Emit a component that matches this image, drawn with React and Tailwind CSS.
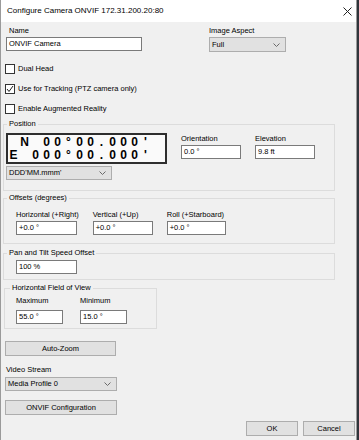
import React from 'react'

const font = { fontFamily: '"Liberation Sans", Arial, sans-serif' }

function Chevron() {
  return (
    <svg width="7" height="4" viewBox="0 0 7 4" className="shrink-0">
      <polyline points="0.5,0.5 3.5,3.5 6.5,0.5" fill="none" stroke="#6a6a6a" strokeWidth="1" />
    </svg>
  )
}

function TextBox({ value, className = '' }) {
  return (
    <div className={`h-[14px] bg-white border border-[#7a7a7a] flex items-center pl-[2px] ${className}`}>
      {value}
    </div>
  )
}

function Combo({ value, className = '' }) {
  return (
    <div className={`h-[14px] bg-[#e1e1e1] border border-[#adadad] flex items-center justify-between pl-[2px] pr-[5px] ${className}`}>
      <span>{value}</span>
      <Chevron />
    </div>
  )
}

function Button({ children, className = '' }) {
  return (
    <div className={`h-[15px] bg-[#e1e1e1] border border-[#adadad] flex items-center justify-center ${className}`}>
      {children}
    </div>
  )
}

function Check({ label, checked }) {
  return (
    <div className="h-[20px] flex items-center gap-[3px] ml-[-1px]">
      <div className="w-[10px] h-[10px] bg-white border border-[#333333] flex items-center justify-center">
        {checked && (
          <svg width="8" height="8" viewBox="0 0 8 8">
            <polyline points="1,4 3,6.5 7,1" fill="none" stroke="#222" strokeWidth="1" />
          </svg>
        )}
      </div>
      <span>{label}</span>
    </div>
  )
}

function Group({ title, className = '', children }) {
  return (
    <fieldset className={`border border-[#dcdcdc] pl-[2px] ${className}`}>
      <legend className="ml-[1px] px-[2px] h-[10px] leading-[10px]">{title}</legend>
      {children}
    </fieldset>
  )
}

function Field({ label, value, width }) {
  return (
    <div className="flex flex-col">
      <div className="h-[10px] leading-[10px]">{label}</div>
      <TextBox value={value} className={`mt-[1px] ${width}`} />
    </div>
  )
}

function LcdRow({ text }) {
  return (
    <div className="flex h-[13px] items-center">
      {text.split('').map((c, i) => (
        <span key={i} className="w-[11px] text-center leading-[12px]">{c}</span>
      ))}
    </div>
  )
}

export default function App() {
  return (
    <div className="w-[359px] h-[440px] bg-[#30353b] flex text-[7.5px] text-black leading-[10px]" style={font}>
      <div className="w-[357px] h-full bg-[#f0f0f0] border-l border-r border-[#9a9a9a] flex flex-col">
        {/* Title bar */}
        <div className="h-[22px] bg-white flex items-center justify-between pl-[6px] pr-[4px]">
          <span className="text-[8px]">Configure Camera ONVIF 172.31.200.20:80</span>
          <svg width="9" height="9" viewBox="0 0 9 9">
            <path d="M0.5 0.5 L8.5 8.5 M8.5 0.5 L0.5 8.5" stroke="#222" strokeWidth="1" />
          </svg>
        </div>

        <div className="flex-1 flex flex-col pl-[5px] pr-[1px]">
          {/* Name / Image Aspect */}
          <div className="flex mt-[4px] gap-[67px]">
            <div className="flex flex-col w-[136px]">
              <div className="h-[10px] pl-[3px]">Name</div>
              <TextBox value="ONVIF Camera" className="mt-[1px]" />
            </div>
            <div className="flex flex-col w-[77px]">
              <div className="h-[10px]">Image Aspect</div>
              <Combo value="Full" className="mt-[1px] h-[15px]" />
            </div>
          </div>

          <div className="flex flex-col mt-[7px]">
            <Check label="Dual Head" />
            <Check label="Use for Tracking (PTZ camera only)" checked />
            <Check label="Enable Augmented Reality" />
          </div>

          {/* Position */}
          <Group title="Position" className="ml-[-3px] w-[332px] pb-[10px]">
            <div className="flex">
              <div className="flex flex-col">
                <div className="mt-[4px] w-[161px] h-[31px] border-2 border-[#2e2e2e] bg-[#fafafa] text-[12px] font-bold flex flex-col justify-center">
                  <LcdRow text=" N 00°00.000'" />
                  <LcdRow text="E 000°00.000'" />
                </div>
                <Combo value="DDD'MM.mmm'" className="mt-[2px] w-[106px]" />
              </div>
              <div className="flex gap-[14px] ml-[14px] mt-[5px]">
                <Field label="Orientation" value="0.0 °" width="w-[60px]" />
                <Field label="Elevation" value="9.8 ft" width="w-[60px]" />
              </div>
            </div>
          </Group>

          {/* Offsets */}
          <Group title="Offsets (degrees)" className="ml-[-3px] w-[332px] mt-[2px] pb-[8px]">
            <div className="flex gap-[14px] ml-[10px] mt-[7px]">
              <Field label="Horizontal (+Right)" value="+0.0 °" width="w-[61px]" />
              <Field label="Vertical (+Up)" value="+0.0 °" width="w-[60px]" />
              <Field label="Roll (+Starboard)" value="+0.0 °" width="w-[59px]" />
            </div>
          </Group>

          {/* Pan and Tilt */}
          <Group title="Pan and Tilt Speed Offset" className="ml-[-3px] w-[332px] mt-[4px] pb-[5px]">
            <TextBox value="100 %" className="ml-[10px] mt-[2px] w-[61px]" />
          </Group>

          {/* HFOV */}
          <fieldset className="border border-[#dcdcdc] pl-[2px] ml-[-2px] w-[153px] mt-[3px] pb-[4px]">
            <legend className="ml-[3px] px-[2px] h-[10px] leading-[10px]">Horizontal Field of View</legend>
            <div className="flex gap-[17px] ml-[9px] mt-[3px]">
              <div className="flex flex-col">
                <div className="h-[10px]">Maximum</div>
                <TextBox value="55.0 °" className="mt-[4px] w-[47px]" />
              </div>
              <div className="flex flex-col">
                <div className="h-[10px]">Minimum</div>
                <TextBox value="15.0 °" className="mt-[4px] w-[47px]" />
              </div>
            </div>
          </fieldset>

          <Button className="mt-[12px] ml-[-1px] w-[111px]">Auto-Zoom</Button>

          <div className="mt-[9px] h-[10px]">Video Stream</div>
          <Combo value="Media Profile 0" className="mt-[2px] ml-[-1px] w-[112px]" />

          <Button className="mt-[9px] ml-[-1px] w-[112px]">ONVIF Configuration</Button>

          <div className="flex justify-end gap-[5px] mt-[6px]">
            <Button className="w-[52px]">OK</Button>
            <Button className="w-[52px]">Cancel</Button>
          </div>
        </div>
      </div>
    </div>
  )
}
